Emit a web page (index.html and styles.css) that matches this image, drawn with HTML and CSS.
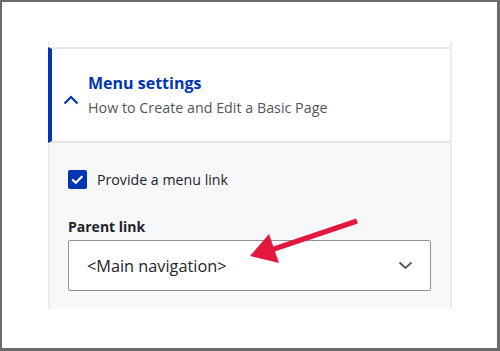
FILE: index.html
```html
<!DOCTYPE html>
<html lang="en">
<head>
  <meta charset="UTF-8" />
  <title>Menu settings</title>
  <link rel="stylesheet" href="styles.css">
</head>
<body>
  <div class="frame">
    <div class="panel">
      <div class="summary">
        <svg class="chev-up" width="16" height="10" viewBox="0 0 16 10">
          <path d="M1.5 8.5 L8 2 L14.5 8.5" fill="none" stroke="#0036b1" stroke-width="2.2" />
        </svg>
        <div class="summary-text">
          <div class="title">Menu settings</div>
          <div class="subtitle">How to Create and Edit a Basic Page</div>
        </div>
      </div>

      <div class="content">
        <label class="check-row">
          <span class="checkbox">
            <svg width="19" height="19" viewBox="0 0 19 19">
              <path d="M4.2 9.5 L7.8 12.8 L14.3 6.2" fill="none" stroke="#fff" stroke-width="2.2" />
            </svg>
          </span>
          <span class="check-label">Provide a menu link</span>
        </label>

        <div class="field-label">Parent link</div>
        <div class="select">
          <span>&lt;Main navigation&gt;</span>
          <svg class="chev-down" width="15" height="9" viewBox="0 0 15 9">
            <path d="M1.5 1.5 L7.5 7 L13.5 1.5" fill="none" stroke="#55565b" stroke-width="1.8" />
          </svg>
        </div>
      </div>
    </div>

    <!-- annotation arrow laid over the form -->
    <svg class="arrow" width="500" height="351" viewBox="0 0 500 351">
      <line x1="357" y1="221" x2="268" y2="251" stroke="#e3183f" stroke-width="5.5" stroke-linecap="butt" />
      <polygon points="250,256 269,234 279,263" fill="#e3183f" />
    </svg>
  </div>
</body>
</html>
```

FILE: styles.css
```css
* {
  box-sizing: border-box;
}
body {
  margin: 0;
  background: #fff;
  font-family: "Open Sans", "Noto Sans", sans-serif;
}
.frame {
  position: relative;
  width: 500px;
  height: 351px;
  border: 2px solid #6b6b6b;
  border-right-width: 3px;
  border-bottom-width: 3px;
  padding-top: 40px;
  padding-left: 46px;
  overflow: hidden;
}
.panel {
  width: 404px;
  border-left: 2px solid #ececec;
  border-right: 2px solid #ececec;
  padding-top: 5px;
}
.summary {
  display: flex;
  align-items: center;
  height: 96px;
  background: #fff;
  border-top: 2px solid #e8e8e8;
  border-bottom: 2px solid #e4e4e4;
  border-left: 4px solid #0036b1;
  margin-left: -2px;
  padding-left: 11px;
}
.chev-up {
  margin-top: 10px;
}
.summary-text {
  margin-left: 9px;
}
.title {
  color: #0036b1;
  font-weight: 700;
  font-size: 16px;
  line-height: 22px;
  margin-top: 1px;
}
.subtitle {
  color: #55565b;
  font-size: 14.3px;
  line-height: 22px;
  margin-top: 3px;
}
.content {
  background: #f7f8fa;
  height: 166px;
  padding: 27px 0 0 18px;
}
.check-row {
  display: flex;
  align-items: center;
  gap: 10px;
}
.checkbox {
  width: 19px;
  height: 19px;
  border-radius: 2px;
  background: #0036b1;
  display: flex;
}
.check-label {
  color: #232429;
  font-size: 14.2px;
}
.field-label {
  margin-top: 29px;
  color: #232429;
  font-weight: 700;
  font-size: 14px;
  line-height: 18px;
}
.select {
  margin-top: 4px;
  width: 363px;
  height: 51px;
  background: #fff;
  border: 1px solid #919297;
  border-radius: 2px;
  display: flex;
  align-items: center;
  justify-content: space-between;
  padding: 0 17px 0 18px;
  color: #232429;
  font-size: 16.3px;
}
.arrow {
  position: absolute;
  left: -2px;
  top: -2px;
}
```
